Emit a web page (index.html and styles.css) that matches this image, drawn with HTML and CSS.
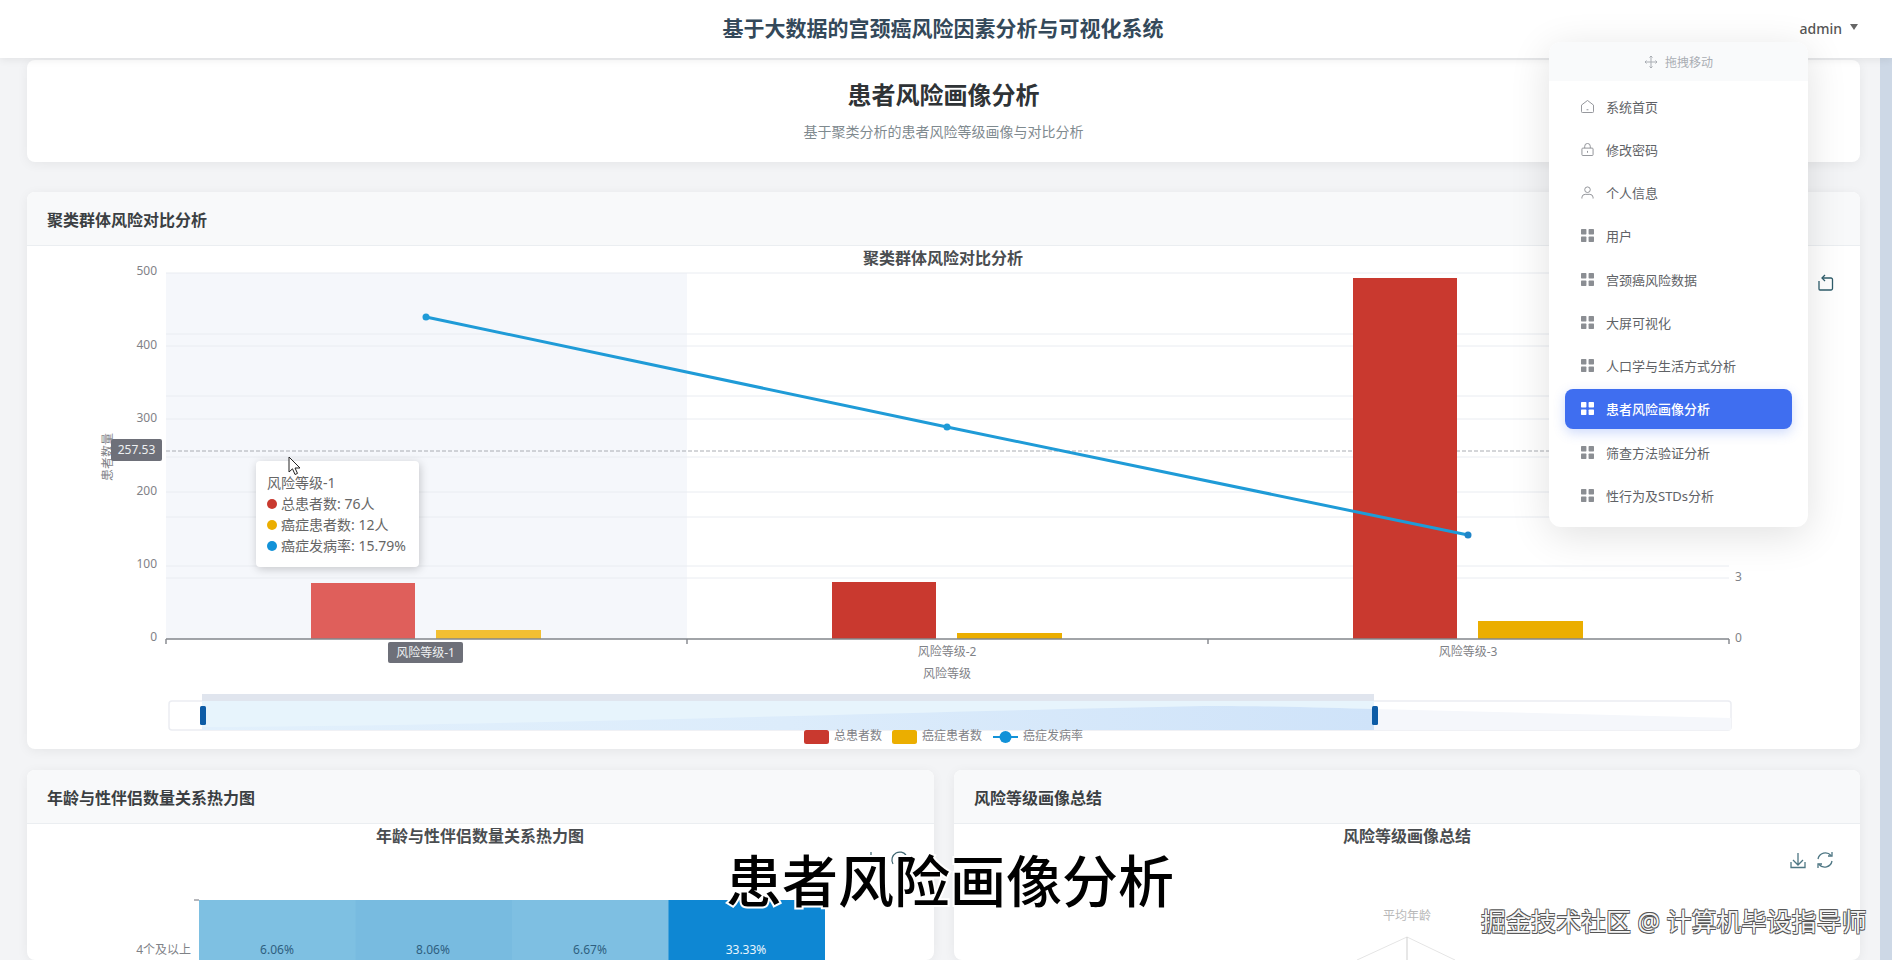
FILE: index.html
```html
<!DOCTYPE html>
<html lang="zh-CN">
<head>
<meta charset="utf-8">
<title>患者风险画像分析</title>
<link rel="stylesheet" href="styles.css">
</head>
<body>
<svg class="defs" width="0" height="0" aria-hidden="true">
  <defs><linearGradient id="zoom-fill" x1="0" y1="0" x2="1" y2="0"><stop offset="0" stop-color="#e2f0fc"/><stop offset=".5" stop-color="#dcecfb"/><stop offset="1" stop-color="#cfe3f9"/></linearGradient></defs>
  <symbol id="i-grid" viewBox="1 1 12 12"><rect x="1" y="1" width="5" height="5" rx=".6"/><rect x="8" y="1" width="5" height="5" rx=".6"/><rect x="1" y="8" width="5" height="5" rx=".6"/><rect x="8" y="8" width="5" height="5" rx=".6"/></symbol>
</svg>
<header class="topbar">
  <div></div>
  <h1 class="sys-title">基于大数据的宫颈癌风险因素分析与可视化系统</h1>
  <div class="user"><span>admin</span><i class="caret"></i></div>
</header>
<div class="shell">
  <main class="main">
    <section class="card hero">
      <h2 class="hero-title">患者风险画像分析</h2>
      <p class="hero-sub">基于聚类分析的患者风险等级画像与对比分析</p>
    </section>
    <section class="card cluster">
      <div class="card-head">聚类群体风险对比分析</div>
      <svg class="chart chart-main" viewBox="27 246 1833 503" width="1833" height="503">
        <text class="c-title" x="943" y="264" text-anchor="middle">聚类群体风险对比分析</text>
        <rect x="166" y="273" width="521" height="366" fill="#f5f7fb"/>
        <g class="grid-lines">
          <path d="M166 273H1729M166 346H1729M166 419H1729M166 492H1729M166 566H1729"/>
          <path d="M166 334H1729M166 396H1729M166 457H1729M166 517H1729M166 578H1729"/>
        </g>
        <path d="M166 451H1729" stroke="#a9acb2" stroke-width="1" stroke-dasharray="4 2" fill="none"/>
        <g class="ax-text" text-anchor="end">
          <text x="157" y="275">500</text><text x="157" y="349">400</text><text x="157" y="422">300</text><text x="157" y="495">200</text><text x="157" y="568">100</text><text x="157" y="641">0</text>
        </g>
        <text class="ax-text" x="1735" y="581">3</text>
        <text class="ax-text" x="1735" y="642">0</text>
        <text class="ax-text" text-anchor="middle" transform="translate(112 457) rotate(-90)">患者数量</text>
        <rect x="311" y="583" width="104" height="56" fill="#df5f5b"/>
        <rect x="436" y="630" width="105" height="9" fill="#f2bf32"/>
        <rect x="832" y="582" width="104" height="57" fill="#c9392f"/>
        <rect x="957" y="633" width="105" height="6" fill="#ebae00"/>
        <rect x="1353" y="278" width="104" height="361" fill="#c9392f"/>
        <rect x="1478" y="621" width="105" height="18" fill="#ebae00"/>
        <path d="M166 639H1729M166 639v5M687 639v5M1208 639v5M1729 639v5" stroke="#83868c" stroke-width="1.4" fill="none"/>
        <path d="M426 317L947 427L1468 535" stroke="#1f9bd7" stroke-width="3" fill="none"/>
        <circle cx="426" cy="317" r="3.500" fill="#1f9bd7"/><circle cx="947" cy="427" r="3.500" fill="#1f9bd7"/><circle cx="1468" cy="535" r="3.500" fill="#1f85c8"/>
        <text class="ax-text" x="947" y="656" text-anchor="middle">风险等级-2</text>
        <text class="ax-text" x="1468" y="656" text-anchor="middle">风险等级-3</text>
        <text class="ax-text" x="947" y="678" text-anchor="middle">风险等级</text>
        <rect x="111" y="439" width="51" height="22" rx="2" fill="#6e7079"/>
        <text class="chip" x="136.500" y="454" text-anchor="middle">257.53</text>
        <rect x="388" y="642" width="75" height="21" rx="2" fill="#6e7079"/>
        <text class="chip" x="425.500" y="657" text-anchor="middle">风险等级-1</text>
        <g fill="none" stroke="#2f5d6b" stroke-width="1.300"><path d="M1822 278h9a1.500 1.500 0 0 1 1.500 1.500v9a1.500 1.500 0 0 1-1.500 1.500h-11a1 1 0 0 1-1-1v-8"/><path d="M1825 275l-3 3 3 3"/></g>
        <rect x="169" y="701" width="1562" height="29" rx="3" fill="#fff" stroke="#ebedf2" stroke-width="1.500"/>
        <path d="M1374 709L1731 718V730H1374Z" fill="#f5f7fb"/>
        <rect x="202" y="694" width="1172" height="7" fill="#e0e5ee"/>
        <rect x="202" y="701" width="1172" height="29" fill="#e7f4fc"/>
        <path d="M202 727C500 726 900 712 1204 706C1280 706 1330 708 1374 709V730H202Z" fill="url(#zoom-fill)"/>
        <rect x="200" y="706" width="6" height="19" rx="1.500" fill="#0d5ca6"/>
        <rect x="1372" y="706" width="6" height="19" rx="1.500" fill="#0d5ca6"/>
        <rect x="804" y="730" width="25" height="14" rx="2.500" fill="#c9392f"/>
        <text class="ax-text" x="834" y="740">总患者数</text>
        <rect x="892" y="730" width="25" height="14" rx="2.500" fill="#ebae00"/>
        <text class="ax-text" x="922" y="740">癌症患者数</text>
        <path d="M993 737H1018" stroke="#1292d8" stroke-width="2"/><circle cx="1005.500" cy="737" r="6" fill="#1292d8"/>
        <text class="ax-text" x="1023" y="740">癌症发病率</text>
      </svg>
    </section>
    <div class="row">
      <section class="card">
        <div class="card-head">年龄与性伴侣数量关系热力图</div>
        <svg class="chart" viewBox="27 824 907 136" width="907" height="136">
          <text class="c-title" x="480" y="842" text-anchor="middle">年龄与性伴侣数量关系热力图</text>
          <path d="M194 900H199" stroke="#6e7079"/>
          <rect x="199" y="900" width="157" height="60" fill="#7ec0e2"/>
          <rect x="355.500" y="900" width="157" height="60" fill="#78bbe0"/>
          <rect x="512" y="900" width="157" height="60" fill="#7ebfe2"/>
          <rect x="668.500" y="900" width="156.500" height="60" fill="#0e87d3"/>
          <text class="ax-text" x="191" y="954" text-anchor="end">4个及以上</text>
          <g class="heat" text-anchor="middle">
            <text x="277" y="954">6.06%</text><text x="433" y="954">8.06%</text><text x="590" y="954">6.67%</text>
            <text class="heat-hot" x="746" y="954">33.33%</text>
          </g>
          <path d="M871 852v4M893 864a8 8 0 0 1 3-11a8 8 0 0 1 10 2" stroke="#3d6470" stroke-width="1.200" fill="none"/>
        </svg>
      </section>
      <section class="card">
        <div class="card-head">风险等级画像总结</div>
        <svg class="chart" viewBox="954 824 906 136" width="906" height="136">
          <text class="c-title" x="1407" y="842" text-anchor="middle">风险等级画像总结</text>
          <g fill="none" stroke="#4d7683" stroke-width="1.300">
            <path d="M1798 853v12M1793 860l5 5 5-5M1791 862v5.500h14V862"/>
            <path d="M1818 859a7.500 7.500 0 0 1 13-3.500M1832 861a7.500 7.500 0 0 1-13 3.500"/>
            <path d="M1832 852v4h-4M1818 868v-4h4"/>
          </g>
          <text class="radar-text" x="1407" y="920" text-anchor="middle">平均年龄</text>
          <path d="M1357 960L1407 937L1455 960" stroke="#e5e5e5" fill="none"/>
          <path d="M1407 937V960" stroke="#cfcfcf"/>
        </svg>
      </section>
    </div>
  </main>
  <div class="edge"></div>
</div>

<div class="tooltip">
  <div>风险等级-1</div>
  <div class="tip-row"><i class="dot dot-red"></i>总患者数: 76人</div>
  <div class="tip-row"><i class="dot dot-yellow"></i>癌症患者数: 12人</div>
  <div class="tip-row"><i class="dot dot-blue"></i>癌症发病率: 15.79%</div>
</div>
<svg class="cursor" width="14" height="21" viewBox="0 0 14 21"><path d="M1 1V16L4.500 12.800L7 18.500L9.500 17.400L7 12H12Z" fill="#fff" stroke="#222" stroke-width="1"/></svg>

<nav class="menu">
  <div class="menu-drag">
    <svg width="14" height="14" viewBox="0 0 14 14" fill="none" stroke="#a9adb3" stroke-width="1"><path d="M7 1V13M1 7H13M5.500 2.500L7 1L8.500 2.500M5.500 11.500L7 13L8.500 11.500M2.500 5.500L1 7L2.500 8.500M11.500 5.500L13 7L11.500 8.500"/></svg>
    <span>拖拽移动</span>
  </div>
  <ul class="menu-list">
    <li class="menu-item"><svg class="m-ico" viewBox="0 0 14 14" fill="none" stroke="#8b8e93" stroke-width="1"><path d="M.5 5.500L7 .5L13.500 5.500V12.500a1 1 0 0 1-1 1H1.500a1 1 0 0 1-1-1ZM6 10.500H8"/></svg>系统首页</li>
    <li class="menu-item"><svg class="m-ico" viewBox="0 0 14 14" fill="none" stroke="#8b8e93" stroke-width="1"><rect x="1" y="5.500" width="12" height="8" rx="1"/><path d="M4 5.500V3.500a3 3 0 0 1 6 0V5.500M7 8.500V10.500"/></svg>修改密码</li>
    <li class="menu-item"><svg class="m-ico" viewBox="0 0 14 14" fill="none" stroke="#8b8e93" stroke-width="1"><circle cx="7" cy="4" r="3"/><path d="M1 13.500V12a3.500 3.500 0 0 1 3.500-3H9.500a3.500 3.500 0 0 1 3.500 3v1.500"/></svg>个人信息</li>
    <li class="menu-item"><svg class="m-ico m-grid"><use href="#i-grid"/></svg>用户</li>
    <li class="menu-item"><svg class="m-ico m-grid"><use href="#i-grid"/></svg>宫颈癌风险数据</li>
    <li class="menu-item"><svg class="m-ico m-grid"><use href="#i-grid"/></svg>大屏可视化</li>
    <li class="menu-item"><svg class="m-ico m-grid"><use href="#i-grid"/></svg>人口学与生活方式分析</li>
    <li class="menu-item active"><svg class="m-ico m-grid"><use href="#i-grid"/></svg>患者风险画像分析</li>
    <li class="menu-item"><svg class="m-ico m-grid"><use href="#i-grid"/></svg>筛查方法验证分析</li>
    <li class="menu-item"><svg class="m-ico m-grid"><use href="#i-grid"/></svg>性行为及STDs分析</li>
  </ul>
</nav>

<div class="caption">患者风险画像分析</div>
<div class="watermark">掘金技术社区 @ 计算机毕设指导师</div>
</body>
</html>
```

FILE: styles.css
```css
* { box-sizing: border-box; }
html, body { margin: 0; padding: 0; }
body {
  width: 1892px;
  height: 960px;
  overflow: hidden;
  position: relative;
  background: #f3f4f6;
  font-family: "Noto Sans", "Noto Sans CJK SC", sans-serif;
  color: #333;
}
.defs { display: block; height: 0; }

.topbar {
  position: relative;
  z-index: 5;
  height: 58px;
  padding-right: 6px;
  display: grid;
  grid-template-columns: 1fr auto 1fr;
  align-items: center;
  background: #fff;
  box-shadow: 0 2px 8px rgba(0, 0, 0, .07);
}
.sys-title {
  margin: -2px 0 0;
  font-size: 21px;
  font-weight: 700;
  line-height: 58px;
  color: #34495a;
}
.user {
  display: flex;
  justify-content: flex-end;
  align-items: center;
  gap: 8px;
  padding-right: 28px;
  font-size: 14px;
  font-weight: 500;
  color: #555;
  margin-top: -2px;
}
.caret {
  width: 0;
  height: 0;
  border-left: 4px solid transparent;
  border-right: 4px solid transparent;
  border-top: 6px solid #666;
  margin-top: -2px;
}

.shell { display: flex; height: 902px; overflow: hidden; }
.main {
  width: 1880px;
  flex: none;
  padding: 2px 20px 0 27px;
  display: flex;
  flex-direction: column;
}
.edge { flex: 1; background: #cdd8e6; }

.card {
  flex: none;
  background: #fff;
  border-radius: 8px;
  box-shadow: 0 2px 12px rgba(0, 0, 0, .06);
}
.hero {
  height: 102px;
  text-align: center;
  padding-top: 20px;
}
.hero-title {
  margin: 0;
  font-size: 24px;
  font-weight: 700;
  line-height: 30px;
  color: #2f3336;
}
.hero-sub {
  margin: 12px 0 0;
  font-size: 14px;
  line-height: 20px;
  color: #7f8a8f;
}
.cluster { margin-top: 30px; height: 557px; }
.card-head {
  height: 54px;
  display: flex;
  align-items: center;
  padding-left: 20px;
  background: #f8f9fa;
  border-bottom: 1px solid #ebeef1;
  border-radius: 8px 8px 0 0;
  font-size: 16px;
  font-weight: 700;
  color: #3b3f42;
}
.chart { display: block; }
.row {
  margin-top: 21px;
  display: grid;
  grid-template-columns: 907px 906px;
  gap: 20px;
}

.c-title { font-size: 16px; font-weight: 700; fill: #4a4d50; }
.ax-text { font-size: 12px; fill: #7f8287; }
.chip { font-size: 12px; fill: #eef0f2; }
.grid-lines path { stroke: #e9ecf1; stroke-width: 1; fill: none; }
.heat { font-size: 12px; fill: #2f5f80; }
.heat-hot { fill: #eaf5fc; }
.radar-text { font-size: 12px; fill: #b8b8b8; }

.tooltip {
  position: absolute;
  left: 256px;
  top: 461px;
  width: 163px;
  height: 106px;
  padding: 11px;
  background: #fff;
  border-radius: 4px;
  box-shadow: 1px 2px 10px rgba(0, 0, 0, .2);
  font-size: 14px;
  line-height: 21px;
  color: #666;
  white-space: nowrap;
}
.tip-row { display: flex; align-items: center; gap: 4px; }
.dot { width: 10px; height: 10px; border-radius: 50%; flex: none; }
.dot-red { background: #c9392f; }
.dot-yellow { background: #ebae00; }
.dot-blue { background: #1292d8; }
.cursor { position: absolute; left: 288px; top: 456px; }

.menu {
  position: absolute;
  z-index: 6;
  left: 1549px;
  top: 42px;
  width: 259px;
  height: 485px;
  background: #fff;
  border-radius: 12px;
  box-shadow: 0 8px 40px rgba(0, 0, 0, .12);
}
.menu-drag {
  height: 39px;
  display: flex;
  align-items: center;
  justify-content: center;
  gap: 7px;
  background: #f9fafb;
  border-radius: 12px 12px 0 0;
  font-size: 12px;
  color: #a9adb3;
}
.menu-list { list-style: none; margin: 0; padding: 5px 16px 0; }
.menu-item {
  height: 40px;
  margin-bottom: 3.250px;
  padding-left: 16px;
  display: flex;
  align-items: center;
  gap: 12px;
  border-radius: 8px;
  font-size: 13px;
  color: #606266;
}
.m-ico { width: 13px; height: 13px; flex: none; }
.m-grid { fill: #8b8e93; }
.active {
  background: #3f6ef0;
  color: #fff;
  font-weight: 500;
  box-shadow: 0 4px 12px rgba(63, 110, 240, .25);
}
.active .m-grid { fill: #fff; }

.caption {
  position: absolute;
  z-index: 7;
  left: 726px;
  top: 840px;
  font-size: 56px;
  line-height: 80px;
  font-weight: 500;
  color: #000;
  -webkit-text-stroke: 4px #fff;
  paint-order: stroke fill;
  white-space: nowrap;
}
.watermark {
  position: absolute;
  z-index: 7;
  left: 1481px;
  top: 903px;
  font-size: 25px;
  line-height: 36px;
  color: #f6f6f6;
  text-shadow: .7px .7px 0 #555, -.7px .7px 0 #555, .7px -.7px 0 #555, -.7px -.7px 0 #555;
  white-space: nowrap;
}
```
